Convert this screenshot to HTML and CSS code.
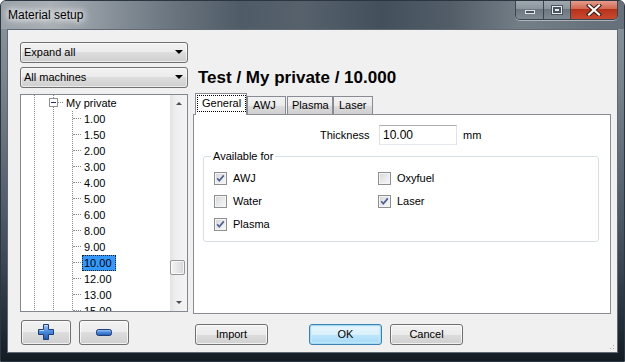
FILE: index.html
```html
<!DOCTYPE html>
<html>
<head>
<meta charset="utf-8">
<link rel="stylesheet" href="styles.css">
</head>
<body>
<div class="window">
  <div class="titlebar">
    <span class="title">Material setup</span>
    <div class="caption">
      <div class="capbtn min"><span class="min-glyph"></span></div>
      <div class="capbtn max"><span class="max-glyph"></span></div>
      <div class="capbtn close">
        <svg width="16" height="12" viewBox="0 0 16 12"><path d="M3 1.5 L13 10.5 M13 1.5 L3 10.5" stroke="#3a1b14" stroke-width="4.2" stroke-linecap="square"/><path d="M3 1.5 L13 10.5 M13 1.5 L3 10.5" stroke="#ffffff" stroke-width="2.2" stroke-linecap="square"/></svg>
      </div>
    </div>
  </div>
  <div class="client">
    <div class="main">
      <div class="left">
        <div class="combo"><span>Expand all</span><span class="arrow"></span></div>
        <div class="combo"><span>All machines</span><span class="arrow"></span></div>
        <div class="tree">
          <div class="tree-rows">
            <div class="row parent"><span class="expander"><span class="minus"></span></span><span class="hline short"></span><span class="label">My private</span></div>
            <div class="children">
              <div class="row child"><span class="hline"></span><span class="label">1.00</span></div>
              <div class="row child"><span class="hline"></span><span class="label">1.50</span></div>
              <div class="row child"><span class="hline"></span><span class="label">2.00</span></div>
              <div class="row child"><span class="hline"></span><span class="label">3.00</span></div>
              <div class="row child"><span class="hline"></span><span class="label">4.00</span></div>
              <div class="row child"><span class="hline"></span><span class="label">5.00</span></div>
              <div class="row child"><span class="hline"></span><span class="label">6.00</span></div>
              <div class="row child"><span class="hline"></span><span class="label">8.00</span></div>
              <div class="row child"><span class="hline"></span><span class="label">9.00</span></div>
              <div class="row child"><span class="hline"></span><span class="label selected">10.00</span></div>
              <div class="row child"><span class="hline"></span><span class="label">12.00</span></div>
              <div class="row child"><span class="hline"></span><span class="label">13.00</span></div>
              <div class="row child"><span class="hline"></span><span class="label">15.00</span></div>
            </div>
          </div>
          <div class="vscroll">
            <div class="sarrow up"></div>
            <div class="track"><div class="thumb"></div></div>
            <div class="sarrow down"></div>
          </div>
        </div>
      </div>
      <div class="right">
        <div class="path">Test / My private / 10.000</div>
        <div class="tabs">
          <div class="tab active"><span class="focus">General</span></div>
          <div class="tab t-awj">AWJ</div>
          <div class="tab t-plasma">Plasma</div>
          <div class="tab t-laser">Laser</div>
        </div>
        <div class="panel">
          <div class="thick-row">
            <span class="thick-label">Thickness</span>
            <div class="textbox">10.00</div>
            <span class="unit">mm</span>
          </div>
          <fieldset class="group">
            <legend>Available for</legend>
            <div class="checks">
              <label class="check"><span class="chk"><svg width="11" height="11" viewBox="0 0 11 11"><path d="M2.2 5.3 L4.3 7.8 L8.8 2.4" fill="none" stroke="#4b5f91" stroke-width="1.7"/></svg></span>AWJ</label>
              <label class="check"><span class="chk"></span>Oxyfuel</label>
              <label class="check"><span class="chk"></span>Water</label>
              <label class="check"><span class="chk"><svg width="11" height="11" viewBox="0 0 11 11"><path d="M2.2 5.3 L4.3 7.8 L8.8 2.4" fill="none" stroke="#4b5f91" stroke-width="1.7"/></svg></span>Laser</label>
              <label class="check"><span class="chk"><svg width="11" height="11" viewBox="0 0 11 11"><path d="M2.2 5.3 L4.3 7.8 L8.8 2.4" fill="none" stroke="#4b5f91" stroke-width="1.7"/></svg></span>Plasma</label>
            </div>
          </fieldset>
        </div>
      </div>
    </div>
    <div class="bottom">
      <div class="btn icon-btn">
        <svg width="18" height="18" viewBox="0 0 18 18">
          <defs><linearGradient id="pg" x1="0" y1="0" x2="0" y2="1"><stop offset="0" stop-color="#a9cdf7"/><stop offset="0.45" stop-color="#4f8ee0"/><stop offset="1" stop-color="#1d56b3"/></linearGradient></defs>
          <path d="M6.5 1.5 H11.5 V6.5 H16.5 V11.5 H11.5 V16.5 H6.5 V11.5 H1.5 V6.5 H6.5 Z" fill="url(#pg)" stroke="#1f3f78" stroke-width="1"/>
          <path d="M7.5 2.5 H10.5 M2.5 7.5 H7" stroke="#dcecff" stroke-width="1" opacity="0.8"/>
        </svg>
      </div>
      <div class="btn icon-btn minus-btn">
        <svg width="18" height="7" viewBox="0 0 18 7">
          <defs><linearGradient id="mg" x1="0" y1="0" x2="0" y2="1"><stop offset="0" stop-color="#a9cdf7"/><stop offset="0.45" stop-color="#4f8ee0"/><stop offset="1" stop-color="#1d56b3"/></linearGradient></defs>
          <rect x="1.5" y="0.5" width="15" height="6" rx="2" fill="url(#mg)" stroke="#1f3f78" stroke-width="1"/>
        </svg>
      </div>
      <div class="btn text-btn import">Import</div>
      <div class="btn text-btn ok">OK</div>
      <div class="btn text-btn cancel">Cancel</div>
      <div class="grip"></div>
    </div>
  </div>
</div>
</body>
</html>
```

FILE: styles.css
```css
* { box-sizing: border-box; }
html, body { margin: 0; padding: 0; background: #ffffff; }
body {
  font-family: "Liberation Sans", Arial, sans-serif;
  font-size: 11px;
  color: #000;
}

.window {
  width: 625px;
  height: 362px;
  display: flex;
  flex-direction: column;
  border: 1px solid #2c3641;
  border-radius: 6px 6px 0 0;
  background: linear-gradient(180deg, #8d979f 0, #76818b 25%, #4d5965 60%, #1f2a35 92%, #141b23 100%);
  overflow: hidden;
}

.titlebar {
  height: 28px;
  display: flex;
  align-items: flex-start;
  justify-content: space-between;
  padding-left: 7px;
  padding-right: 6px;
  background: linear-gradient(90deg, #9aa2a9 0, #a9b0b6 50px, #88919a 110px, #6a757f 170px, #4f5b66 240px, #56616c 300px, #43505b 380px, #525d68 450px, #737e87 520px, #66717b 600px);
}
.title {
  margin-top: 7px;
  font-size: 12px;
  color: #000;
  text-shadow: 0 0 6px #fff, 0 0 8px #fff, 0 0 10px rgba(255,255,255,0.8);
}
.caption {
  display: flex;
  height: 20px;
  margin-top: -1px;
  border: 1px solid #3b4550;
  border-top: none;
  border-radius: 0 0 5px 5px;
  overflow: hidden;
  box-shadow: 0 1px 0 rgba(255,255,255,0.45);
}
.capbtn {
  height: 19px;
  display: flex;
  align-items: center;
  justify-content: center;
}
.capbtn.min {
  width: 28px;
  border-right: 1px solid #3b4550;
  background: linear-gradient(180deg, #a3abb2 0, #8c959d 45%, #6d7780 50%, #7f8991 100%);
}
.capbtn.max {
  width: 27px;
  border-right: 1px solid #3b4550;
  background: linear-gradient(180deg, #a3abb2 0, #8c959d 45%, #6d7780 50%, #7f8991 100%);
}
.capbtn.close {
  width: 46px;
  background: linear-gradient(180deg, #e7a394 0, #d36a52 45%, #b8321a 50%, #c94a30 100%);
}
.min-glyph {
  width: 10px;
  height: 4px;
  margin-top: 4px;
  background: #4a545e;
  border: 1px solid #e0e4e8;
}
.max-glyph {
  width: 10px;
  height: 8px;
  border: 1px solid #e8ecef;
  box-shadow: inset 0 0 0 2px #4a545e, 0 0 0 1px #4a545e;
  background: #e8ecef;
}

.client {
  margin: 0 6px 8px 6px;
  height: 325px;
  border: 1px solid #5f6a74;
  background: #f0f0f0;
  display: flex;
  flex-direction: column;
}

.main {
  display: flex;
  gap: 5px;
  padding: 12px 6px 0 12px;
  height: 284px;
}

.left {
  width: 168px;
  display: flex;
  flex-direction: column;
}
.combo {
  height: 21px;
  border: 1px solid #707070;
  border-radius: 3px;
  background: linear-gradient(180deg, #f2f2f2 0, #ebebeb 50%, #dddddd 50%, #cfcfcf 100%);
  box-shadow: inset 0 0 0 1px rgba(255,255,255,0.6);
  display: flex;
  align-items: center;
  justify-content: space-between;
  padding: 0 4px 0 3px;
  margin-bottom: 4px;
}
.combo + .combo { margin-bottom: 6px; }
.arrow {
  width: 0;
  height: 0;
  border-left: 4px solid transparent;
  border-right: 4px solid transparent;
  border-top: 4px solid #000;
}

.tree {
  height: 218px;
  border: 1px solid #828790;
  background: #fff;
  display: flex;
  overflow: hidden;
}
.tree-rows {
  flex: 1;
  overflow: hidden;
  background-image:
    repeating-linear-gradient(180deg, #8a8a8a 0 1px, transparent 1px 2px),
    repeating-linear-gradient(180deg, #8a8a8a 0 1px, transparent 1px 2px);
  background-size: 1px 100%, 1px 100%;
  background-position: 13px 0, 32px 0;
  background-repeat: no-repeat;
}
.row {
  height: 16px;
  display: flex;
  align-items: center;
  white-space: nowrap;
}
.row.parent { padding-left: 28px; }
.expander {
  width: 9px;
  height: 9px;
  border: 1px solid #919191;
  background: #fff;
  display: flex;
  align-items: center;
  justify-content: center;
}
.minus {
  width: 5px;
  height: 1px;
  background: #1d2f6b;
}
.hline {
  height: 0;
  width: 8px;
  border-top: 1px dotted #8a8a8a;
}
.hline.short { width: 5px; }
.row.child { padding-left: 52px; }
.children {
  background-image: repeating-linear-gradient(180deg, #8a8a8a 0 1px, transparent 1px 2px);
  background-size: 1px 100%;
  background-position: 51px 0;
  background-repeat: no-repeat;
}
.label {
  height: 16px;
  line-height: 16px;
  padding: 0 2px;
  margin-left: 1px;
}
.label.selected {
  background: #3399ff;
  outline: 1px dotted #1a1a1a;
  outline-offset: -1px;
  padding: 0 4px 0 2px;
}

.vscroll {
  width: 17px;
  display: flex;
  flex-direction: column;
  background: linear-gradient(90deg, #e3e3e3 0, #eeeeee 30%, #f3f3f3 100%);
}
.sarrow {
  height: 17px;
  display: flex;
  align-items: center;
  justify-content: center;
}
.sarrow.up::after {
  content: "";
  border-left: 3px solid transparent;
  border-right: 3px solid transparent;
  border-bottom: 3px solid #4d4d4d;
}
.sarrow.down::after {
  content: "";
  border-left: 3px solid transparent;
  border-right: 3px solid transparent;
  border-top: 3px solid #4d4d4d;
}
.track {
  flex: 1;
  display: flex;
  flex-direction: column;
  padding-top: 148px;
}
.thumb {
  height: 15px;
  width: 15px;
  border: 1px solid #979797;
  border-radius: 2px;
  background: linear-gradient(90deg, #f4f4f4 0, #e6e6e6 50%, #d6d6d6 100%);
  box-shadow: inset 0 0 0 1px rgba(255,255,255,0.7);
}

.right {
  flex: 1;
  display: flex;
  flex-direction: column;
  padding-top: 25px;
}
.path {
  height: 21px;
  line-height: 21px;
  font-size: 17px;
  font-weight: bold;
  padding-left: 5px;
  margin-bottom: 5px;
}
.tabs {
  height: 21px;
  display: flex;
  align-items: flex-end;
  padding-left: 2px;
  position: relative;
  z-index: 1;
}
.tab {
  height: 18px;
  border: 1px solid #898c95;
  border-bottom: none;
  background: linear-gradient(180deg, #f2f2f2 0, #ebebeb 50%, #dddddd 50%, #cfcfcf 100%);
  line-height: 17px;
  white-space: nowrap;
}
.tab.active {
  height: 22px;
  margin-bottom: -1px;
  width: 52px;
  background: #ffffff;
  padding: 2px 1px 0 2px;
  line-height: 15px;
}
.focus {
  display: block;
  outline: 1px dotted #000;
  padding: 0 4px;
  height: 15px;
}
.t-awj { width: 39px; padding-left: 5px; }
.t-plasma { width: 46px; margin-left: 1px; padding-left: 4px; }
.t-laser { width: 40px; padding-left: 5px; }

.panel {
  height: 200px;
  border: 1px solid #898c95;
  background: #ffffff;
}
.thick-row {
  display: flex;
  align-items: center;
  padding: 10px 0 0 126px;
  height: 31px;
}
.thick-label { width: 59px; }
.textbox {
  width: 78px;
  height: 20px;
  border: 1px solid #abadb3;
  border-color: #abadb3 #e2e3ea #e3e9ef #dbdfe6;
  padding: 0 3px;
  line-height: 18px;
  font-size: 12px;
  background: #fff;
}
.unit { margin-left: 6px; }

.group {
  margin: 4px 11px 0 9px;
  padding: 9px 10px 0 10px;
  height: 92px;
  border: 1px solid #d5dfe5;
  border-radius: 3px;
}
.group legend {
  padding: 0 2px;
  margin-left: -3px;
  font-size: 11px;
  line-height: 13px;
}
.checks {
  display: grid;
  grid-template-columns: 164px auto;
  row-gap: 10px;
}
.check {
  display: flex;
  align-items: center;
  height: 13px;
  gap: 6px;
}
.chk {
  width: 13px;
  height: 13px;
  border: 1px solid #8e8f8f;
  background: linear-gradient(135deg, #d3d5d9 0, #e8e9eb 50%, #f8f8f8 100%);
  box-shadow: inset 0 0 0 1px #f4f4f4;
  display: flex;
  align-items: center;
  justify-content: center;
}

.bottom {
  flex: 1;
  display: flex;
  align-items: flex-start;
  padding: 6px 0 0 13px;
  position: relative;
}
.btn {
  border: 1px solid #707070;
  border-radius: 3px;
  background: linear-gradient(180deg, #f2f2f2 0, #ebebeb 50%, #dddddd 50%, #cfcfcf 100%);
  box-shadow: inset 0 0 0 1px rgba(255,255,255,0.7);
  display: flex;
  align-items: center;
  justify-content: center;
}
.icon-btn { width: 50px; height: 25px; }
.minus-btn { margin-left: 8px; }
.text-btn { width: 73px; height: 21px; margin-top: 4px; }
.import { margin-left: 66px; }
.ok {
  margin-left: 41px;
  border-color: #3c7fb1;
  box-shadow: inset 0 0 0 1px #a7dcf5, inset 0 0 0 2px rgba(200,235,250,0.6);
  background: linear-gradient(180deg, #eaf6fd 0, #d9f0fc 50%, #bee6fd 50%, #a7d9f5 100%);
}
.cancel { margin-left: 8px; }
.grip {
  position: absolute;
  right: 1px;
  bottom: 1px;
  width: 10px;
  height: 10px;
  background-image: radial-gradient(circle, #a8a8a8 0.8px, transparent 1px);
  background-size: 3px 3px;
  clip-path: polygon(100% 0, 100% 100%, 0 100%);
}
```
